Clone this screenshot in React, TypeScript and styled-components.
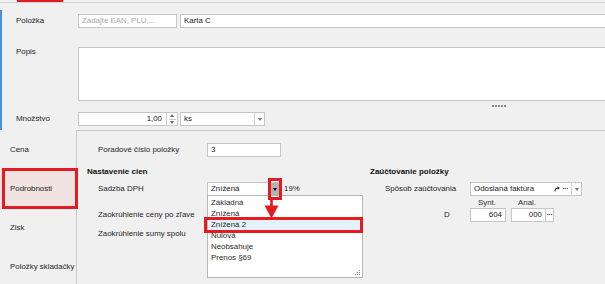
import React from 'react';
import styled, { createGlobalStyle } from 'styled-components';

const RED = '#e31b23';

const GlobalStyle = createGlobalStyle`
  html, body {
    margin: 0;
    padding: 0;
    background: #f0f0f0;
  }
  body {
    font-family: 'Liberation Sans', Arial, sans-serif;
  }
`;

const Page = styled.div`
  width: 605px;
  height: 284px;
  overflow: hidden;
  background: #f0f0f0;
  font-size: 7.9px;
  line-height: 10px;
  color: #1f1f1f;
  display: flex;
  flex-direction: column;
`;

const TabStrip = styled.div`
  flex-shrink: 0;
  height: 2px;
  border-bottom: 1px solid #d4d4d4;
  display: flex;
`;

const TabMarker = styled.div`
  margin-left: 17px;
  width: 46px;
  height: 2px;
  background: ${RED};
  border-right: 1px solid #c8c8c8;
`;

const UpperForm = styled.div`
  flex-shrink: 0;
  box-sizing: border-box;
  height: 127px;
  padding: 11px 0 0 16px;
  display: flex;
  flex-direction: column;
  background: linear-gradient(#4a8fd8, #4a8fd8) 0 7px / 2px 127px no-repeat;
`;

const FormRow = styled.div<{ $top?: boolean; $gap?: number }>`
  display: grid;
  grid-template-columns: 62px 1fr;
  align-items: ${(p) => (p.$top ? 'start' : 'center')};
  margin-top: ${(p) => p.$gap ?? 0}px;
`;

const Label = styled.span`
  white-space: nowrap;
`;

const Fields = styled.div<{ $gap?: number }>`
  display: flex;
  gap: ${(p) => p.$gap ?? 3}px;
  margin-right: -8px;
`;

const Box = styled.div<{ $width?: number; $grow?: boolean; $right?: boolean }>`
  box-sizing: border-box;
  height: 14px;
  border: 1px solid #c6c6c6;
  background: #fff;
  display: flex;
  align-items: center;
  justify-content: ${(p) => (p.$right ? 'flex-end' : 'flex-start')};
  padding: 0 3px;
  white-space: nowrap;
  color: #1a1a1a;
  ${(p) => (p.$width ? `width: ${p.$width}px; flex-shrink: 0;` : '')}
  ${(p) => (p.$grow ? 'flex: 1;' : '')}
`;

const Placeholder = styled.span`
  color: #a8a8a8;
`;

const TextArea = styled.div`
  height: 54px;
  box-sizing: border-box;
  border: 1px solid #c6c6c6;
  background: #fff;
  margin-right: -8px;
`;

const Splitter = styled.div`
  height: 11px;
  box-sizing: border-box;
  padding: 4px 0 0 476px;
  display: flex;
  gap: 1px;
`;

const GripDot = styled.span`
  width: 2px;
  height: 2px;
  background: #8a8a8a;
`;

const Caret = styled.span<{ $dir?: 'up' | 'down'; $color?: string; $w?: number; $h?: number }>`
  width: 0;
  height: 0;
  border-left: ${(p) => (p.$w ?? 5) / 2}px solid transparent;
  border-right: ${(p) => (p.$w ?? 5) / 2}px solid transparent;
  ${(p) =>
    p.$dir === 'up'
      ? `border-bottom: ${p.$h ?? 3}px solid ${p.$color ?? '#555'};`
      : `border-top: ${p.$h ?? 3}px solid ${p.$color ?? '#555'};`}
`;

const NumberBox = styled(Box)`
  padding: 0;
`;

const NumberValue = styled.span`
  flex: 1;
  text-align: right;
  padding-right: 4px;
`;

const Spinner = styled.div`
  width: 10px;
  height: 100%;
  border-left: 1px solid #d0d0d0;
  display: flex;
  flex-direction: column;
  align-items: center;
  justify-content: space-evenly;
`;

const SpinLine = styled.span`
  width: 7px;
  height: 1px;
  background: #c8c8c8;
`;

const Combo = styled(Box)`
  padding: 0;
  position: relative;
`;

const ComboText = styled.span`
  flex: 1;
  padding-left: 3px;
  overflow: hidden;
`;

const ComboButton = styled.div<{ $pressed?: boolean; $w?: number }>`
  width: ${(p) => p.$w ?? 9}px;
  height: 100%;
  box-sizing: border-box;
  display: flex;
  align-items: center;
  justify-content: center;
  border-left: 1px solid ${(p) => (p.$pressed ? '#9a9a9a' : '#d0d0d0')};
  background: ${(p) => (p.$pressed ? '#b2b2b2' : 'transparent')};
  position: relative;
`;

const ButtonMark = styled.div`
  position: absolute;
  left: -3px;
  right: -3px;
  top: -5px;
  bottom: -5px;
  border: 3px solid ${RED};
  z-index: 3;
`;

const ArrowMark = styled.svg`
  position: absolute;
  left: -7px;
  top: 17px;
  z-index: 3;
`;

const Lower = styled.div`
  flex: 1;
  display: flex;
  min-height: 0;
`;

const SideTabs = styled.div`
  width: 76px;
  flex-shrink: 0;
  display: flex;
  flex-direction: column;
`;

const SideTab = styled.div<{ $active?: boolean }>`
  height: 39px;
  flex-shrink: 0;
  display: flex;
  align-items: center;
  padding-left: 10px;
  white-space: nowrap;
  position: relative;
  background: ${(p) => (p.$active ? '#f1e3e1' : 'transparent')};
  ${(p) =>
    p.$active
      ? `&::after {
          content: '';
          position: absolute;
          left: 2px;
          right: -2px;
          top: -1px;
          bottom: -1px;
          border: 3px solid ${RED};
        }`
      : ''}
`;

const Panel = styled.div`
  flex: 1;
  border-top: 1px solid #c8c8c8;
  border-left: 1px solid #c8c8c8;
  padding: 12px 0 0 10px;
  display: flex;
  flex-direction: column;
`;

const PanelRow = styled.div<{ $indent?: number; $gap?: number; $labelW?: number }>`
  display: flex;
  align-items: center;
  height: 14px;
  margin-left: ${(p) => p.$indent ?? 11}px;
  margin-top: ${(p) => p.$gap ?? 0}px;
  & > ${Label} {
    width: ${(p) => p.$labelW ?? 109}px;
    flex-shrink: 0;
  }
`;

const Columns = styled.div`
  display: flex;
  margin-top: 9px;
`;

const Column = styled.div<{ $width?: number }>`
  display: flex;
  flex-direction: column;
  ${(p) => (p.$width ? `width: ${p.$width}px; flex-shrink: 0;` : 'flex: 1;')}
`;

const SectionTitle = styled.div`
  height: 12px;
  line-height: 12px;
  font-weight: bold;
  color: #111;
  font-size: 8px;
`;

const Rate = styled.span`
  margin-left: 4px;
`;

const DropList = styled.div`
  position: absolute;
  left: -1px;
  top: 12px;
  width: 156px;
  height: 83px;
  box-sizing: border-box;
  background: #fff;
  border: 1px solid #b8b8b8;
  padding-top: 1px;
  z-index: 2;
  color: #2a2a2a;
`;

const DropItem = styled.div<{ $marked?: boolean }>`
  height: 11px;
  line-height: 11px;
  padding-left: 3px;
  position: relative;
  background: ${(p) => (p.$marked ? '#e4f0fa' : 'transparent')};
  ${(p) =>
    p.$marked
      ? `&::after {
          content: '';
          position: absolute;
          left: -4px;
          right: -1px;
          top: -2px;
          bottom: -3px;
          border: 3px solid ${RED};
        }`
      : ''}
`;

const Grip = styled.svg`
  position: absolute;
  right: 1px;
  bottom: 1px;
`;

const HeadRow = styled.div`
  display: flex;
  align-items: flex-end;
  height: 12px;
  margin-left: 100px;
  color: #333;
`;

const HeadCell = styled.span<{ $width: number; $pad: number }>`
  width: ${(p) => p.$width}px;
  padding-left: ${(p) => p.$pad}px;
  box-sizing: border-box;
`;

const InlineIcons = styled.div`
  display: flex;
  align-items: center;
  gap: 3px;
  padding-right: 3px;
`;

const Dots = styled.span`
  font-size: 7px;
  letter-spacing: -0.5px;
  color: #333;
  font-weight: bold;
  line-height: 7px;
  padding-bottom: 2px;
`;

const SideButton = styled.div`
  width: 8px;
  height: 14px;
  box-sizing: border-box;
  border: 1px solid #c6c6c6;
  border-left: none;
  background: #fff;
  display: flex;
  align-items: center;
  justify-content: center;
`;

const AccountGroup = styled.div`
  display: flex;
  gap: 5px;
`;

const AccountField = styled.div`
  display: flex;
`;

const AccountSide = styled(Label)`
  padding-left: 59px;
  box-sizing: border-box;
`;

const rates = ['Základná', 'Znížená', 'Znížená 2', 'Nulová', 'Neobsahuje', 'Prenos §69'];

const tabs = ['Cena', 'Podrobnosti', 'Zisk', 'Položky skladačky'];

export default function App() {
  return (
    <>
      <GlobalStyle />
      <Page>
        <TabStrip>
          <TabMarker />
        </TabStrip>
        <UpperForm>
          <FormRow>
            <Label>Položka</Label>
            <Fields>
              <Box $width={99}>
                <Placeholder>Zadajte EAN, PLU,...</Placeholder>
              </Box>
              <Box $grow>Karta C</Box>
            </Fields>
          </FormRow>
          <FormRow $top $gap={19}>
            <Label>Popis</Label>
            <TextArea />
          </FormRow>
          <Splitter>
            {[0, 1, 2, 3, 4].map((i) => (
              <GripDot key={i} />
            ))}
          </Splitter>
          <FormRow>
            <Label>Množstvo</Label>
            <Fields $gap={2}>
              <NumberBox $width={100}>
                <NumberValue>1,00</NumberValue>
                <Spinner>
                  <Caret $dir="up" $w={5} $h={3} $color="#666" />
                  <SpinLine />
                  <Caret $dir="down" $w={5} $h={3} $color="#666" />
                </Spinner>
              </NumberBox>
              <Combo $width={85}>
                <ComboText>ks</ComboText>
                <ComboButton $w={10}>
                  <Caret $w={5} $h={3} $color="#777" />
                </ComboButton>
              </Combo>
            </Fields>
          </FormRow>
        </UpperForm>
        <Lower>
          <SideTabs>
            {tabs.map((t) => (
              <SideTab key={t} $active={t === 'Podrobnosti'}>
                {t}
              </SideTab>
            ))}
          </SideTabs>
          <Panel>
            <PanelRow>
              <Label>Poradové číslo položky</Label>
              <Box $width={74}>3</Box>
            </PanelRow>
            <Columns>
              <Column $width={283}>
                <SectionTitle>Nastavenie cien</SectionTitle>
                <PanelRow $gap={4}>
                  <Label>Sadzba DPH</Label>
                  <Combo $width={73}>
                    <ComboText>Znížená</ComboText>
                    <ComboButton $pressed>
                      <Caret $w={5} $h={3} $color="#111" />
                      <ButtonMark />
                      <ArrowMark width="15" height="19" viewBox="0 0 15 19">
                        <rect x="6.2" y="0" width="2.6" height="6" fill={RED} />
                        <path d="M0.5 5.5 H14.5 L7.5 18.5 Z" fill={RED} />
                      </ArrowMark>
                    </ComboButton>
                    <DropList>
                      {rates.map((r) => (
                        <DropItem key={r} $marked={r === 'Znížená 2'}>
                          {r}
                        </DropItem>
                      ))}
                      <Grip width="6" height="6" viewBox="0 0 6 6">
                        <rect x="4" y="0" width="1" height="1" fill="#888" />
                        <rect x="2" y="2" width="1" height="1" fill="#888" />
                        <rect x="4" y="2" width="1" height="1" fill="#888" />
                        <rect x="0" y="4" width="1" height="1" fill="#888" />
                        <rect x="2" y="4" width="1" height="1" fill="#888" />
                        <rect x="4" y="4" width="1" height="1" fill="#888" />
                      </Grip>
                    </DropList>
                  </Combo>
                  <Rate>19%</Rate>
                </PanelRow>
                <PanelRow $gap={12}>
                  <Label>Zaokrúhlenie ceny po zľave</Label>
                </PanelRow>
                <PanelRow $gap={5}>
                  <Label>Zaokrúhlenie sumy spolu</Label>
                </PanelRow>
              </Column>
              <Column>
                <SectionTitle>Zaúčtovanie položky</SectionTitle>
                <PanelRow $indent={15} $gap={4} $labelW={85}>
                  <Label>Spôsob zaúčtovania</Label>
                  <Combo $width={112}>
                    <ComboText>Odoslaná faktúra</ComboText>
                    <InlineIcons>
                      <svg width="6" height="6" viewBox="0 0 6 6">
                        <path d="M1 5.5 C1 3 2 2 4 2" stroke="#333" strokeWidth="1.1" fill="none" />
                        <path d="M3.5 0.2 L6 2 L3.5 3.8 Z" fill="#333" />
                      </svg>
                      <Dots>···</Dots>
                    </InlineIcons>
                    <ComboButton $w={10}>
                      <Caret $w={5} $h={3} $color="#777" />
                    </ComboButton>
                  </Combo>
                </PanelRow>
                <HeadRow>
                  <HeadCell $width={41} $pad={8}>
                    Synt.
                  </HeadCell>
                  <HeadCell $width={40} $pad={7}>
                    Anal.
                  </HeadCell>
                </HeadRow>
                <PanelRow $indent={15} $labelW={85}>
                  <AccountSide>D</AccountSide>
                  <AccountGroup>
                    <Box $width={36} $right>
                      604
                    </Box>
                    <AccountField>
                      <Box $width={35} $right>
                        000
                      </Box>
                      <SideButton>
                        <Dots>···</Dots>
                      </SideButton>
                    </AccountField>
                  </AccountGroup>
                </PanelRow>
              </Column>
            </Columns>
          </Panel>
        </Lower>
      </Page>
    </>
  );
}
